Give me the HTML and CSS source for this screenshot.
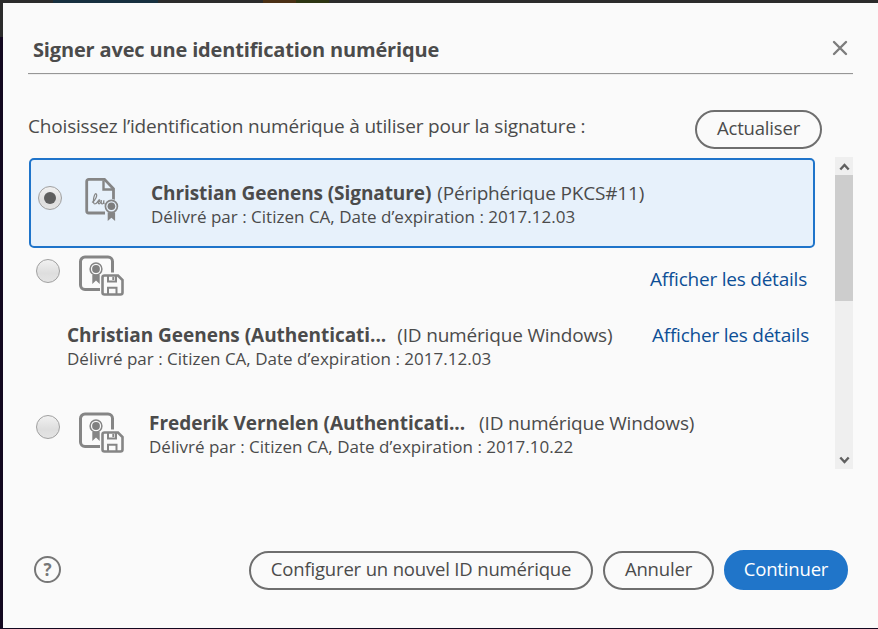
FILE: index.html
```
<!DOCTYPE html>
<html lang="fr">
<head>
<meta charset="utf-8">
<title>Signer avec une identification numérique</title>
<link rel="stylesheet" href="styles.css">
</head>
<body>
<svg class="defs" width="0" height="0" aria-hidden="true">
  <symbol id="cert-disk" viewBox="0 0 46 42">
    <g fill="none" stroke="#858585">
      <path d="M22 34.5H7a4.5 4.5 0 0 1-4.5-4.500V6.500A4.500 4.500 0 0 1 7 2h23a4.500 4.500 0 0 1 4.500 4.500V17.500" stroke-width="3"/>
      <circle cx="18" cy="14" r="5.900" stroke-width="1.500"/>
      <path d="M26.500 20.500h13.500l4.500 4.500v12.500a2 2 0 0 1-2 2h-16a2 2 0 0 1-2-2v-15a2 2 0 0 1 2-2z" stroke-width="2.600"/>
      <path d="M30 21v5.500h8V21M30 39v-6.200h8.500V39" stroke-width="2"/>
    </g>
    <circle cx="18" cy="14" r="3.900" fill="#808080"/>
    <path d="M14.300 19.800h7.400v9.200L18 25.500 14.300 29z" fill="#858585"/>
    <path d="M34.300 22h2v3h-2z" fill="#858585"/>
  </symbol>
</svg>
<main class="dialog">
  <header class="head">
    <h1>Signer avec une identification numérique</h1>
    <svg class="close" width="16" height="16" viewBox="0 0 16 16"><path d="M2 2l12 12M14 2L2 14" fill="none" stroke="#7d7d7d" stroke-width="2.400" stroke-linecap="round"/></svg>
  </header>
  <div class="intro">
    <p>Choisissez l’identification numérique à utiliser pour la signature :</p>
    <button class="btn refresh">Actualiser</button>
  </div>
  <div class="list">
    <div class="rows">
      <div class="row selected">
        <span class="radio on"></span>
        <svg class="icon-sign" width="36" height="46" viewBox="0 0 36 46">
          <g fill="none" stroke="#858585">
            <path d="M21 36H4.700a2 2 0 0 1-2-2V4.400a2 2 0 0 1 2-2H20.500l9 9.300V24" stroke-width="2.800"/>
            <path d="M19.500 3.500V12.500H29" stroke-width="2.400"/>
            <path d="M8 25.500c3.500-2 6-8 4-8.800-2.200-.4-3.800 10.300-1.300 10.300 1.800 0 2.600-1.700 3.300-3 .9-2 2.300-1.200 1.600.1-.6 1.100-1.600 1-1.600 1 .1 2.600 2.700 2.300 3.500-1.900-.5 2.500-.3 3.800.7 3.800s1.500-1.800 1.700-3.800c-.3 2.600 0 3.800 1.300 3.700" stroke-width="1.200"/>
            <circle cx="27.400" cy="29.300" r="7.400" fill="#e7f1fb" stroke="none"/>
            <circle cx="27.400" cy="29.300" r="6" stroke-width="1.700"/>
          </g>
          <circle cx="27.400" cy="29.300" r="3.800" fill="#7d7d7d"/>
          <path d="M23.700 35.300h7.400v8.700L27.400 40.800 23.700 44z" fill="#858585"/>
        </svg>
        <div class="info">
          <p class="name"><b>Christian Geenens (Signature)</b><span class="src">(Périphérique PKCS#11)</span></p>
          <p class="sub">Délivré par : Citizen CA, Date d’expiration : 2017.12.03</p>
        </div>
      </div>
      <div class="row second">
        <span class="radio"></span>
        <svg class="icon-cert" width="46" height="42"><use href="#cert-disk"/></svg>
        <a class="details">Afficher les détails</a>
      </div>
      <div class="row wrapped">
        <div class="info">
          <p class="name"><b>Christian Geenens (Authenticati...</b><span class="src">(ID numérique Windows)</span></p>
          <p class="sub">Délivré par : Citizen CA, Date d’expiration : 2017.12.03</p>
        </div>
        <a class="details">Afficher les détails</a>
      </div>
      <div class="row third">
        <span class="radio"></span>
        <svg class="icon-cert" width="46" height="42"><use href="#cert-disk"/></svg>
        <div class="info">
          <p class="name"><b>Frederik Vernelen (Authenticati...</b><span class="src">(ID numérique Windows)</span></p>
          <p class="sub">Délivré par : Citizen CA, Date d’expiration : 2017.10.22</p>
        </div>
      </div>
    </div>
    <div class="scroll">
      <svg width="18" height="18" viewBox="0 0 18 18"><path d="M5.300 12.500L9.500 8l4.200 4.500" fill="none" stroke="#606060" stroke-width="2.400"/></svg>
      <div class="thumb"></div>
      <svg class="down" width="18" height="18" viewBox="0 0 18 18"><path d="M5.300 6.500L9.500 11l4.200-4.500" fill="none" stroke="#606060" stroke-width="2.400"/></svg>
    </div>
  </div>
  <footer class="foot">
    <span class="help">?</span>
    <button class="btn config">Configurer un nouvel ID numérique</button>
    <button class="btn cancel">Annuler</button>
    <button class="btn primary">Continuer</button>
  </footer>
</main>
</body>
</html>
```
FILE: styles.css
```
* { box-sizing: border-box; }
body {
  margin: 0;
  height: 629px;
  padding: 3px 0 1px 3px;
  overflow: hidden;
  background: linear-gradient(90deg, #2b2b2b 53px, #17303f 53px 158px, #2b2b2b 158px 263px, #4a3015 263px 296px, #2c3512 296px 329px, #2b2b2b 329px) 0 0 / 100% 3px no-repeat,
    linear-gradient(#2b2b2b, #2b2b2b) 0 0 / 3px 37px no-repeat, #130820;
  font-family: "Open Sans", "Noto Sans", sans-serif;
  color: #4b4b4b;
}
h1, p { margin: 0; font-weight: 400; white-space: nowrap; }
.defs { display: none; }
.dialog { height: 625px; background: #fafafa; padding: 0 25px; display: flex; flex-direction: column; }
.head { height: 71px; border-bottom: 1px solid #969696; box-shadow: 0 1px #eee; padding: 33px 5px 0; display: flex; justify-content: space-between; }
.head h1 { font-size: 20px; line-height: 28px; font-weight: 700; letter-spacing: -0.16px; }
.close { margin-top: 4px; }
.intro { height: 83px; padding: 36px 31px 0 0; display: flex; justify-content: space-between; font-size: 19px; line-height: 33px; letter-spacing: -0.18px; }
.btn { height: 39px; border: 2px solid #6e6e6e; border-radius: 20px; background: transparent; font: 18.5px/31px "Open Sans", sans-serif; letter-spacing: -0.17px; color: #4b4b4b; padding: 0 0 4px; white-space: nowrap; }
.refresh { width: 127px; }
.list { height: 312px; display: flex; justify-content: space-between; }
.rows { width: 787px; padding: 1px 0 0 1px; }
.row { display: flex; }
.selected { height: 90px; border: 2px solid #1f74ca; border-radius: 5px; background: #e7f1fb; padding-left: 7px; }
.radio { width: 24px; height: 24px; flex: none; border: 1px solid #a0a0a0; border-radius: 50%; background: linear-gradient(#f1f1f1, #dedede 60%, #e4e4e4); display: flex; align-items: center; justify-content: center; }
.radio.on::after { content: ""; width: 12px; height: 12px; border-radius: 50%; background: #5e5e5e; }
.selected .radio { margin-top: 26px; }
.icon-sign { margin: 17px 0 0 22px; }
.selected .info { margin: 20px 0 0 31px; }
.name { font-size: 19px; line-height: 26px; height: 26px; letter-spacing: -0.18px; }
.name b { letter-spacing: -0.03px; }
.selected .name b { letter-spacing: -0.08px; }
.src { margin-left: 6px; }
.sub { font-size: 17px; line-height: 22px; letter-spacing: 0.01px; }
.details { color: #0d4f96; font-size: 19px; line-height: 26px; letter-spacing: -0.22px; white-space: nowrap; cursor: pointer; }
.second { height: 74px; padding: 7px 8px 0 7px; }
.second .radio { margin-top: 4px; }
.third .radio { margin-top: 3px; }
.icon-cert { margin-left: 18px; flex: none; }
.second .details { margin: 11px 0 0 auto; }
.wrapped { height: 83px; padding: 0 6px 0 38px; justify-content: space-between; }
.third { padding: 7px 0 0 7px; }
.third .info { margin: -2px 0 0 25px; }
.wrapped .src { margin-left: 11px; }
.third .src { margin-left: 14px; }
.scroll { width: 18px; background: #efefef; display: flex; flex-direction: column; }
.scroll svg { flex: none; }
.thumb { height: 126px; background: #cdcdcd; }
.down { margin-top: auto; }
.foot { margin-top: 81px; padding: 0 5px 0 6px; height: 40px; display: flex; align-items: flex-end; }
.help { width: 27px; height: 27px; margin: 0 auto 7px 0; border: 2.500px solid #777; border-radius: 50%; font: 700 17px/23px "Open Sans", sans-serif; text-align: center; color: #777; }
.config { width: 344px; }
.cancel { width: 111px; margin: 0 10px; }
.primary { width: 124px; height: 40px; border-color: #2075c9; background: #2075c9; color: #fff; }
```
